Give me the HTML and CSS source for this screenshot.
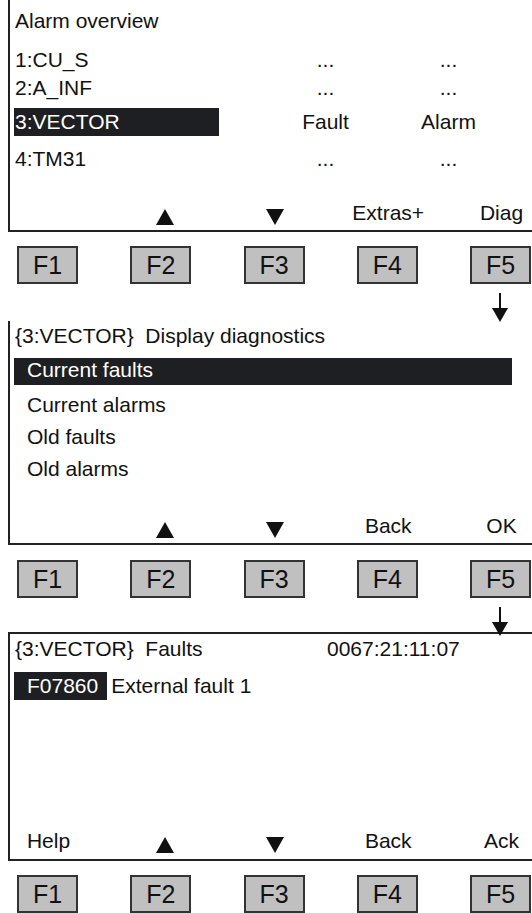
FILE: index.html
```html
<!DOCTYPE html>
<html lang="en">
<head>
    <meta charset="UTF-8">
    <meta name="viewport" content="width=device-width, initial-scale=1.0">
    <title>Alarm overview</title>
    <link rel="stylesheet" href="styles.css">
</head>
<body>

    <!-- pantalla 1: alarm overview -->
    <div class="screen screen-overview">
        <div class="title">Alarm overview</div>
        <div class="alarm-row"><span class="name">1:CU_S</span><span class="fault">...</span><span class="alarm">...</span></div>
        <div class="alarm-row"><span class="name">2:A_INF</span><span class="fault">...</span><span class="alarm">...</span></div>
        <div class="alarm-row selected"><span class="name">3:VECTOR</span><span class="fault">Fault</span><span class="alarm">Alarm</span></div>
        <div class="alarm-row"><span class="name">4:TM31</span><span class="fault">...</span><span class="alarm">...</span></div>
        <div class="softkeys">
            <span></span>
            <span class="up"><svg width="18" height="16" viewBox="0 0 18 16"><polygon points="9,0 18,16 0,16"/></svg></span>
            <span class="down"><svg width="18" height="16" viewBox="0 0 18 16"><polygon points="0,0 18,0 9,16"/></svg></span>
            <span>Extras+</span>
            <span>Diag</span>
        </div>
    </div>
    <div class="fkeys">
        <div class="fkey">F1</div>
        <div class="fkey">F2</div>
        <div class="fkey">F3</div>
        <div class="fkey">F4</div>
        <div class="fkey">F5</div>
    </div>
    <div class="flow-arrow">
        <svg width="16" height="29" viewBox="0 0 16 29"><line x1="8" y1="0" x2="8" y2="16" stroke="#111" stroke-width="2"/><polygon points="0,15 16,15 8,29"/></svg>
    </div>

    <!-- pantalla 2: display diagnostics -->
    <div class="screen screen-diag">
        <div class="title">{3:VECTOR} &nbsp;Display diagnostics</div>
        <div class="menu-item current">Current faults</div>
        <div class="menu-item first">Current alarms</div>
        <div class="menu-item">Old faults</div>
        <div class="menu-item">Old alarms</div>
        <div class="softkeys">
            <span></span>
            <span class="up"><svg width="18" height="16" viewBox="0 0 18 16"><polygon points="9,0 18,16 0,16"/></svg></span>
            <span class="down"><svg width="18" height="16" viewBox="0 0 18 16"><polygon points="0,0 18,0 9,16"/></svg></span>
            <span>Back</span>
            <span>OK</span>
        </div>
    </div>
    <div class="fkeys">
        <div class="fkey">F1</div>
        <div class="fkey">F2</div>
        <div class="fkey">F3</div>
        <div class="fkey">F4</div>
        <div class="fkey">F5</div>
    </div>
    <div class="flow-arrow short">
        <svg width="16" height="29" viewBox="0 0 16 29"><line x1="8" y1="0" x2="8" y2="16" stroke="#111" stroke-width="2"/><polygon points="0,15 16,15 8,29"/></svg>
    </div>

    <!-- pantalla 3: faults -->
    <div class="screen screen-faults">
        <div class="title faults-head">
            <span>{3:VECTOR} &nbsp;Faults</span>
            <span>0067:21:11:07</span>
        </div>
        <div class="fault-row"><span class="code">F07860</span><span class="text">External fault 1</span></div>
        <div class="softkeys">
            <span>Help</span>
            <span class="up"><svg width="18" height="16" viewBox="0 0 18 16"><polygon points="9,0 18,16 0,16"/></svg></span>
            <span class="down"><svg width="18" height="16" viewBox="0 0 18 16"><polygon points="0,0 18,0 9,16"/></svg></span>
            <span>Back</span>
            <span>Ack</span>
        </div>
    </div>
    <div class="fkeys">
        <div class="fkey">F1</div>
        <div class="fkey">F2</div>
        <div class="fkey">F3</div>
        <div class="fkey">F4</div>
        <div class="fkey">F5</div>
    </div>

</body>
</html>
```

FILE: styles.css
```css
body {
    margin: 0;
    background: #fff;
    color: #111;
    font-family: "Liberation Sans", Arial, sans-serif;
    font-size: 21px;
}

.screen {
    margin-left: 8px;
    padding: 0 0 3px 4px;
    border-left: 2px solid #222;
    border-bottom: 2px solid #222;
    line-height: 28px;
}

.title {
    padding-left: 1px;
    white-space: nowrap;
}

/* pantalla 1 */
.screen-overview {
    padding-top: 7px;
}

.screen-overview .title {
    margin-bottom: 11px;
}

.alarm-row {
    display: grid;
    grid-template-columns: 205px 45px 123px 123px;
    height: 28px;
}

.alarm-row .name {
    grid-column: 1;
    padding-left: 1px;
}

.alarm-row .fault {
    grid-column: 3;
    text-align: center;
}

.alarm-row .alarm {
    grid-column: 4;
    text-align: center;
}

.alarm-row.selected {
    margin: 6px 0 9px;
}

.alarm-row.selected .name {
    background: #1e1f22;
    color: #fff;
}

.softkeys {
    display: grid;
    grid-template-columns: repeat(5, 61px);
    column-gap: 52.25px;
    padding-left: 4px;
    height: 28px;
    margin-top: 26px;
}

.softkeys span {
    display: flex;
    justify-content: center;
    white-space: nowrap;
}

.softkeys svg {
    display: block;
    margin-top: 10px;
    fill: #111;
}

.softkeys .up svg {
    margin-left: 6px;
}

/* teclas de función */
.fkeys {
    display: grid;
    grid-template-columns: repeat(5, 61px);
    column-gap: 52.25px;
    padding-left: 17px;
    margin-top: 14px;
}

.fkey {
    box-sizing: border-box;
    height: 38px;
    background: #c0c0c0;
    border: 2px solid #333;
    display: flex;
    align-items: center;
    justify-content: center;
    font-size: 25px;
}

.flow-arrow {
    display: flex;
    justify-content: flex-end;
    padding-right: 24px;
    margin-top: 9px;
    height: 28px;
}

.flow-arrow svg {
    display: block;
    fill: #111;
    overflow: visible;
}

.flow-arrow.short {
    height: 25px;
}

/* pantalla 2 */
.screen-diag {
    padding-top: 1px;
}

.screen-diag .title {
    margin-bottom: 8px;
}

.menu-item {
    width: 485px;
    padding-left: 13px;
    line-height: 32px;
}

.menu-item.current {
    background: #1e1f22;
    color: #fff;
    line-height: 24px;
    padding-bottom: 3px;
}

.menu-item.first {
    margin-top: 4px;
}

.screen-diag .softkeys {
    margin-top: 27px;
}

.screen-diag + .fkeys {
    margin-top: 15px;
}

/* pantalla 3 */
.screen-faults {
    border-top: 2px solid #222;
    padding-top: 1px;
    padding-bottom: 4px;
}

.faults-head {
    display: grid;
    grid-template-columns: 312px auto;
}

.fault-row {
    margin-top: 9px;
    display: flex;
}

.fault-row .code {
    background: #1e1f22;
    color: #fff;
    padding: 0 9px 0 13px;
}

.fault-row .text {
    margin-left: 4px;
}

.screen-faults .softkeys {
    margin-top: 127px;
}
```
